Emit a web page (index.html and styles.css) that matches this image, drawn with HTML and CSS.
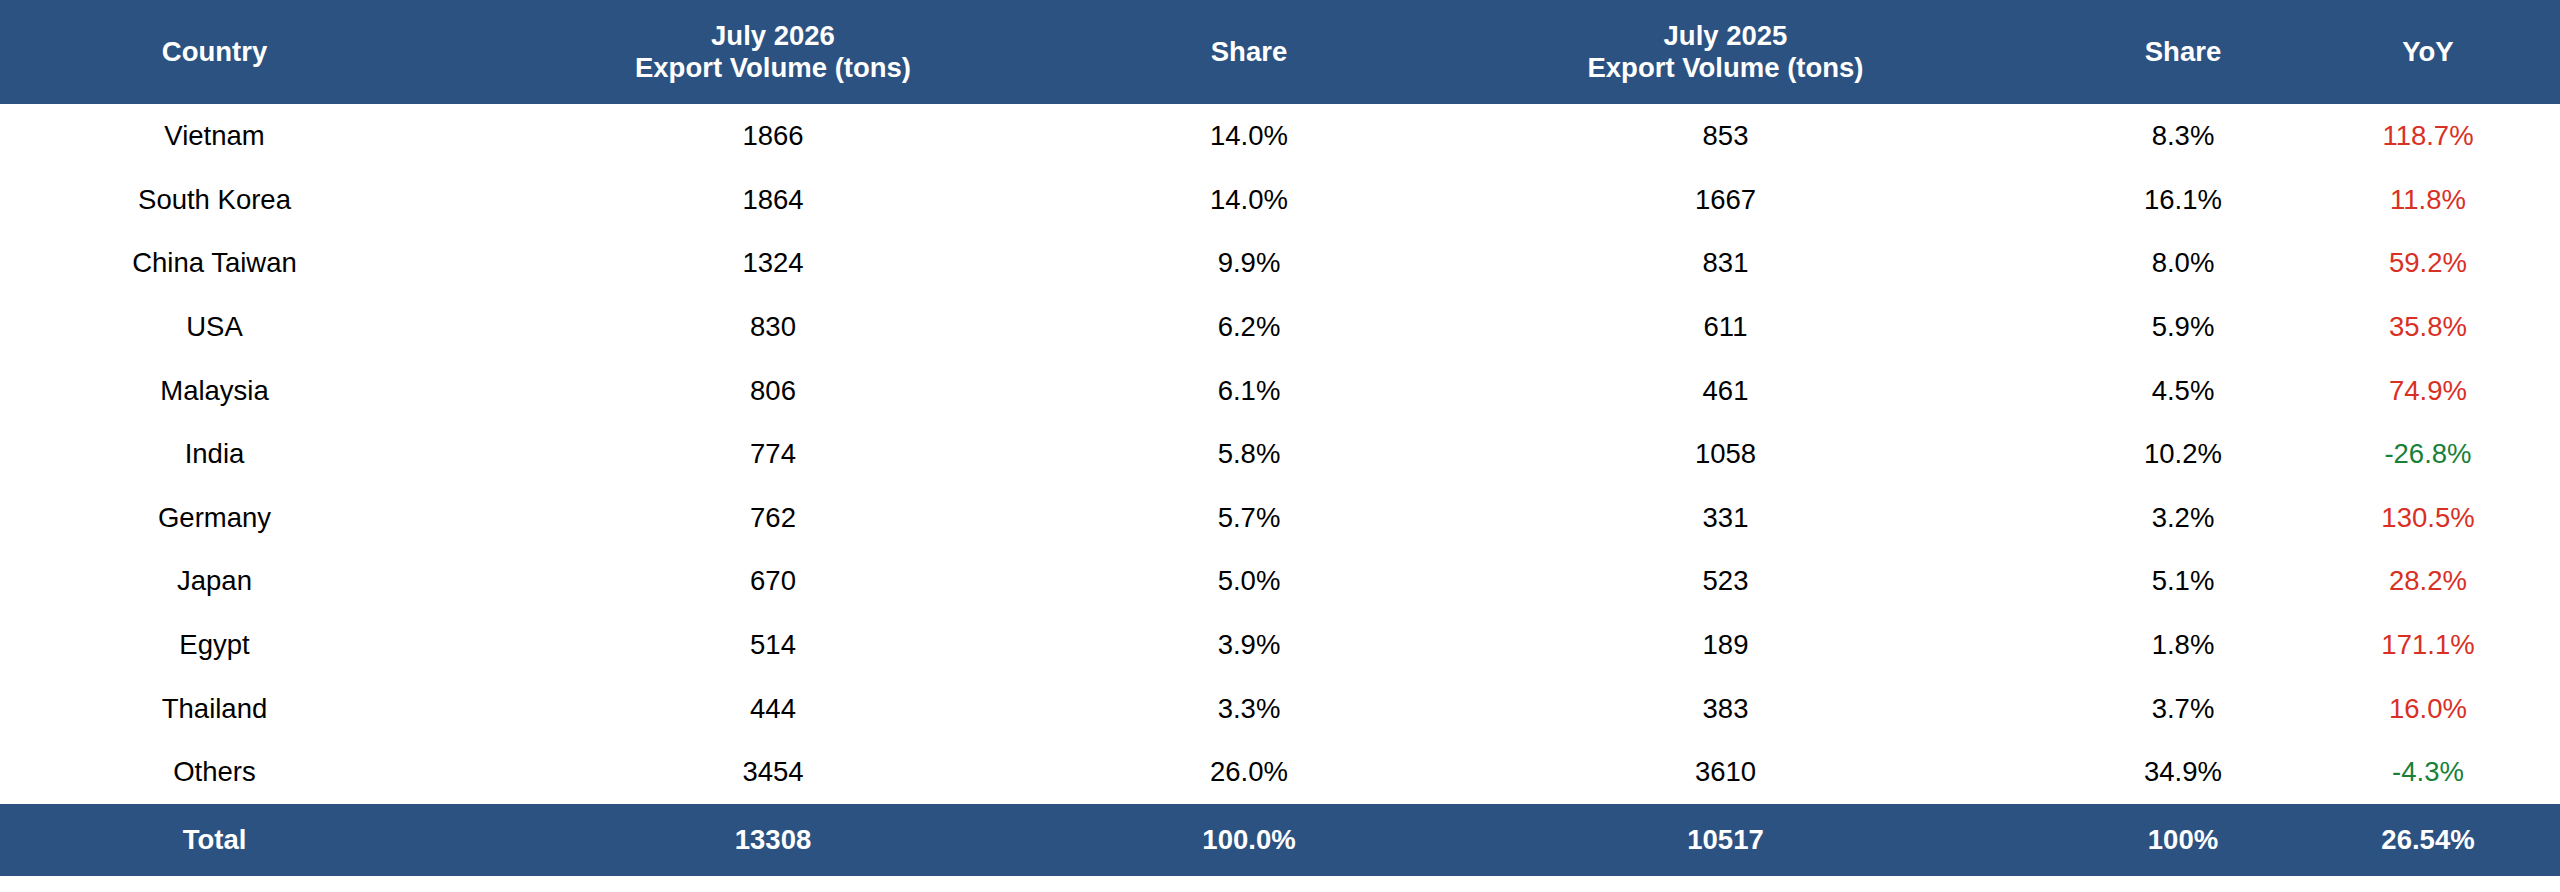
FILE: index.html
```html
<!DOCTYPE html>
<html lang="en">
<head>
<meta charset="utf-8">
<title>Export Volume by Country</title>
<link rel="stylesheet" href="styles.css">
</head>
<body>
<table class="export-table">
  <colgroup>
    <col class="col-country">
    <col class="col-vol">
    <col class="col-share">
    <col class="col-vol2">
    <col class="col-share2">
    <col class="col-yoy">
  </colgroup>
  <thead>
    <tr>
      <th>Country</th>
      <th>July 2026<br>Export Volume (tons)</th>
      <th>Share</th>
      <th>July 2025<br>Export Volume (tons)</th>
      <th>Share</th>
      <th>YoY</th>
    </tr>
  </thead>
  <tbody>
    <tr><td>Vietnam</td><td>1866</td><td>14.0%</td><td>853</td><td>8.3%</td><td class="up">118.7%</td></tr>
    <tr><td>South Korea</td><td>1864</td><td>14.0%</td><td>1667</td><td>16.1%</td><td class="up">11.8%</td></tr>
    <tr><td>China Taiwan</td><td>1324</td><td>9.9%</td><td>831</td><td>8.0%</td><td class="up">59.2%</td></tr>
    <tr><td>USA</td><td>830</td><td>6.2%</td><td>611</td><td>5.9%</td><td class="up">35.8%</td></tr>
    <tr><td>Malaysia</td><td>806</td><td>6.1%</td><td>461</td><td>4.5%</td><td class="up">74.9%</td></tr>
    <tr><td>India</td><td>774</td><td>5.8%</td><td>1058</td><td>10.2%</td><td class="down">-26.8%</td></tr>
    <tr><td>Germany</td><td>762</td><td>5.7%</td><td>331</td><td>3.2%</td><td class="up">130.5%</td></tr>
    <tr><td>Japan</td><td>670</td><td>5.0%</td><td>523</td><td>5.1%</td><td class="up">28.2%</td></tr>
    <tr><td>Egypt</td><td>514</td><td>3.9%</td><td>189</td><td>1.8%</td><td class="up">171.1%</td></tr>
    <tr><td>Thailand</td><td>444</td><td>3.3%</td><td>383</td><td>3.7%</td><td class="up">16.0%</td></tr>
    <tr><td>Others</td><td>3454</td><td>26.0%</td><td>3610</td><td>34.9%</td><td class="down">-4.3%</td></tr>
  </tbody>
  <tfoot>
    <tr><td>Total</td><td>13308</td><td>100.0%</td><td>10517</td><td>100%</td><td>26.54%</td></tr>
  </tfoot>
</table>
</body>
</html>
```
FILE: styles.css
```css
html, body {
  margin: 0;
  padding: 0;
  background: #ffffff;
}

body {
  font-family: "Liberation Sans", Arial, sans-serif;
  font-size: 27.5px;
  color: #000000;
}

.export-table {
  width: 2560px;
  border-collapse: collapse;
  table-layout: fixed;
}

.col-country { width: 429px; }
.col-vol { width: 688px; }
.col-share { width: 264px; }
.col-vol2 { width: 689px; }
.col-share2 { width: 226px; }
.col-yoy { width: 264px; }

.export-table th,
.export-table td {
  text-align: center;
  padding: 16px 0;
  line-height: 1.15;
  font-weight: normal;
}

.export-table thead th {
  background: #2c5282;
  color: #ffffff;
  font-weight: bold;
  line-height: 32px;
  padding: 20px 0;
}

.export-table tfoot td {
  background: #2c5282;
  color: #ffffff;
  font-weight: bold;
  padding: 20px 0;
}

.up { color: #d93025; }
.down { color: #188038; }
```
